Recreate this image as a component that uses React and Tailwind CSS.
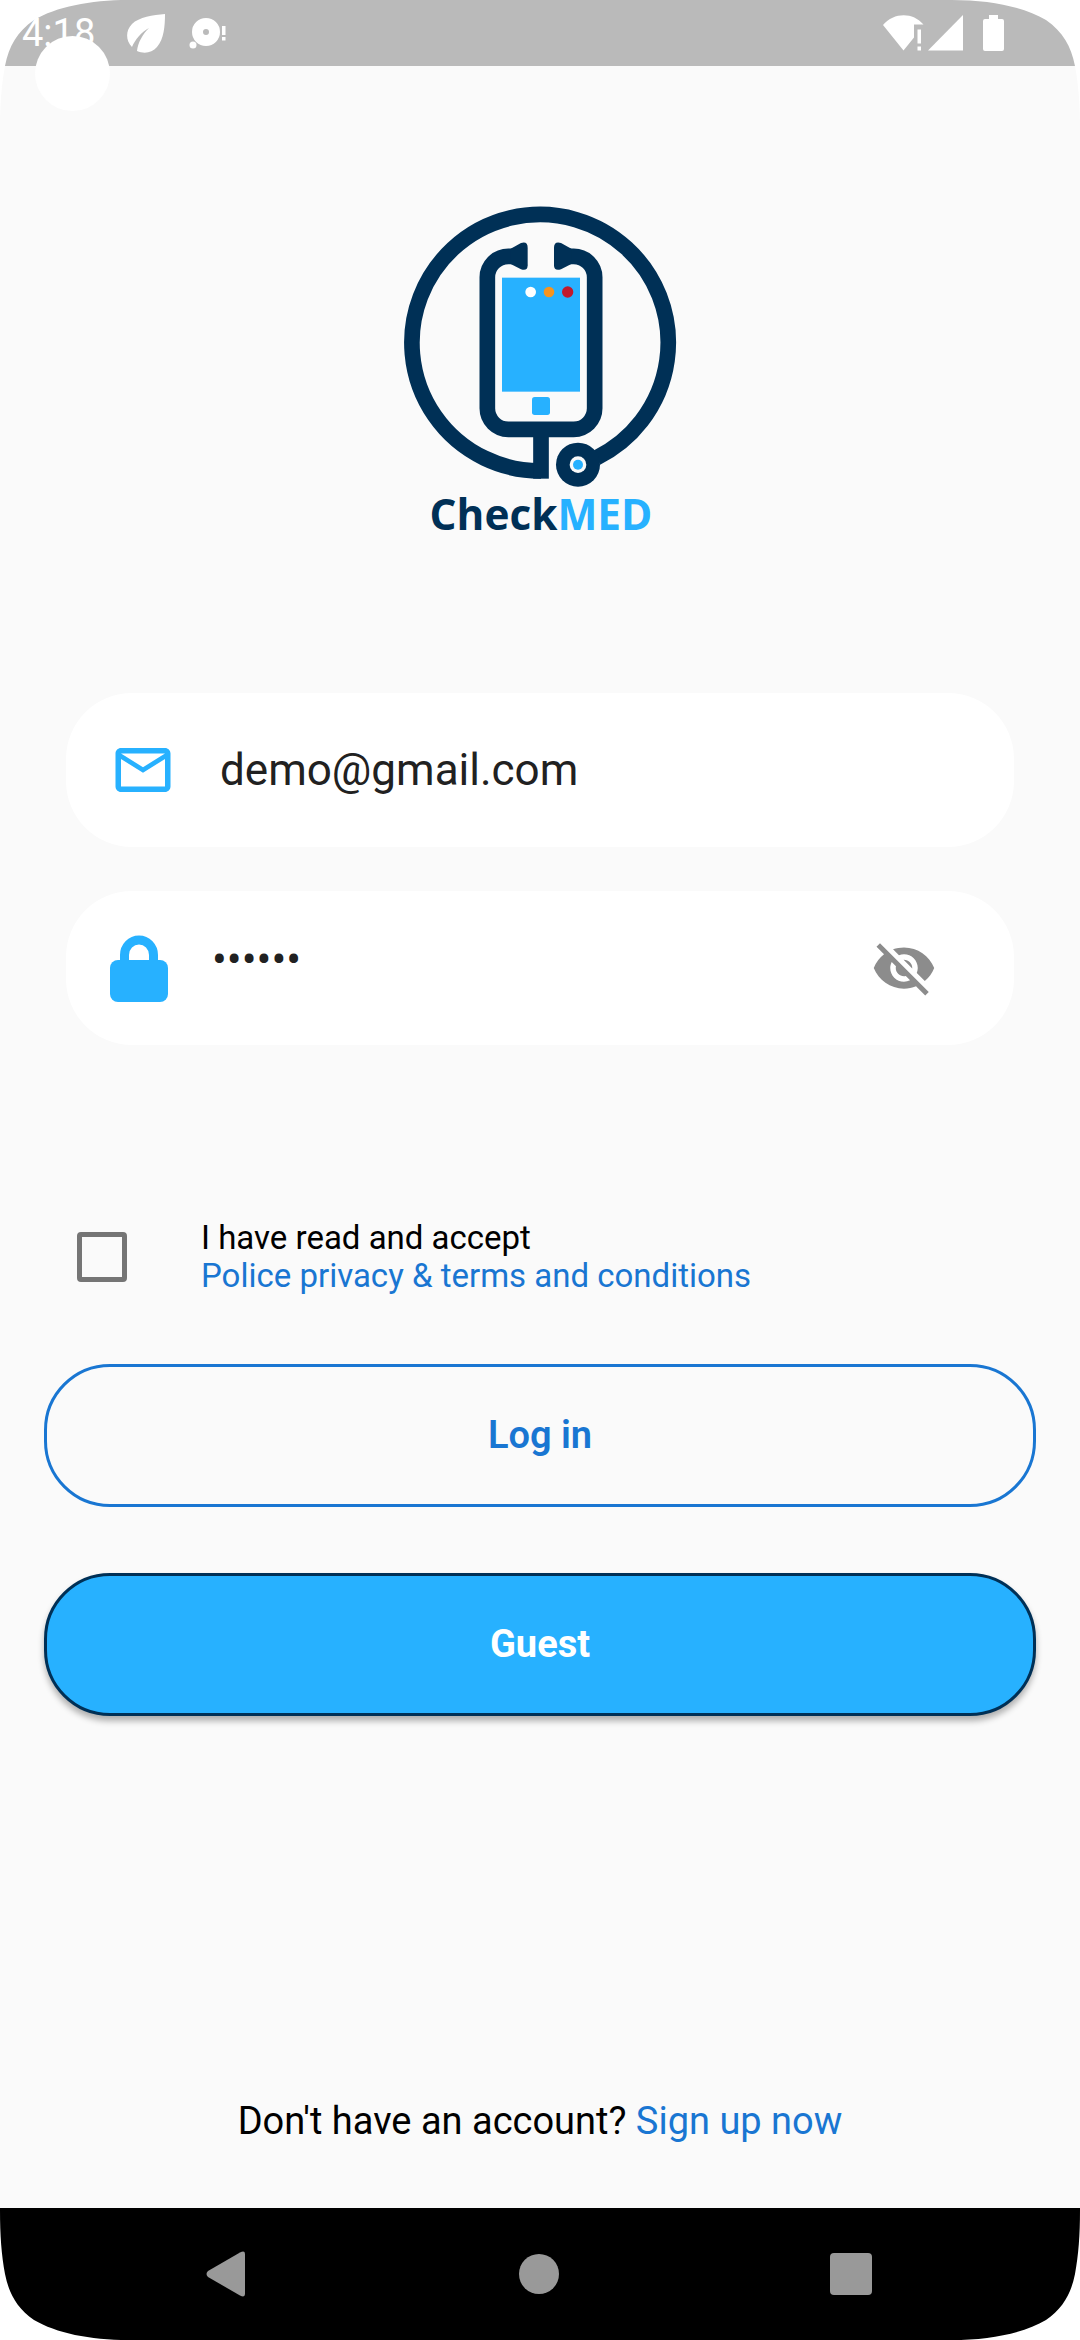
import { useState } from 'react';
import { MdOutlineMail, MdVisibilityOff, MdVisibility } from 'react-icons/md';

/**
 * Login screen for CheckMED, drawn inside the Android system chrome
 * (status bar on top, navigation bar at the bottom).
 */

const CORNERS = [
  'top-0 left-0',
  'top-0 right-0 -scale-x-100',
  'bottom-0 left-0 -scale-y-100',
  'bottom-0 right-0 -scale-100',
];

function ScreenCorner({ className }) {
  return (
    <svg
      viewBox="0 0 130 130"
      className={`absolute size-[130px] text-white pointer-events-none ${className}`}
      fill="currentColor"
      aria-hidden="true"
    >
      <path d="M0 0H128C90 0 56 7 34 20C17 32 9 46 5 66C1.500 85 0 105 0 130Z" />
    </svg>
  );
}

function StatusBar() {
  return (
    <header className="relative h-[66px] bg-[#bababa] text-white flex items-center justify-between pl-[22px] pr-[76px]">
      <div className="flex items-center">
        <span className="w-[76px] text-[38px] leading-[44px]">4:18</span>
        <svg viewBox="0 0 38 39" className="ml-[29px] w-[38px] h-[39px]" fill="currentColor" aria-hidden="true">
          <path d="M38 0C26 1 12 3 5 10C-2 17 -1 27 5 33C8 26 14 18 22 14C16 20 11 28 10 37C17 40 25 39 30 33C37 25 38 12 38 0Z" />
        </svg>
        <svg viewBox="0 0 38 32" className="ml-6 w-[38px] h-8" fill="currentColor" aria-hidden="true">
          <path
            fillRule="evenodd"
            d="M17 1a14 14 0 1 0 0 28a14 14 0 1 0 0-28ZM17 12a3 3 0 1 1 0 6a3 3 0 1 1 0-6Z"
          />
          <circle cx="4" cy="28" r="3.500" />
          <path d="M33 9h3.500v9H33ZM33 20h3.500v3.500H33Z" />
        </svg>
      </div>
      <div className="flex items-center">
        <svg viewBox="0 0 41 36" className="w-[41px] h-9" fill="currentColor" aria-hidden="true">
          <path d="M20.500 35.500L0 10C11-3 30-3 40.500 9.500H31V22.500Z" />
          <path d="M34.500 14.500h3.500v14h-3.500ZM34.500 31.500h3.500v4h-3.500Z" />
        </svg>
        <svg viewBox="0 0 35 36" className="ml-1 w-[35px] h-9" fill="currentColor" aria-hidden="true">
          <path d="M35 0V35.500H0Z" />
        </svg>
        <svg viewBox="0 0 21 36" className="ml-5 w-[21px] h-9" fill="currentColor" aria-hidden="true">
          <path d="M6 0h9v4h4a2 2 0 0 1 2 2v28a2 2 0 0 1-2 2H2a2 2 0 0 1-2-2V6a2 2 0 0 1 2-2h4Z" />
        </svg>
      </div>
      {/* camera cutout */}
      <span className="absolute left-[35px] top-9 size-[75px] rounded-full bg-white" />
    </header>
  );
}

function Logo() {
  return (
    <svg viewBox="0 0 900 1080" className="w-[300px] h-[360px]" role="img" aria-label="CheckMED">
      <g fill="none" stroke="#003056" strokeWidth="47">
        <path d="M620 803A384.500 384.500 0 1 0 453 842.500" />
        <path d="M453 866V718" />
        <path d="M385 199H355A63 63 0 0 0 292 262V655A63 63 0 0 0 355 718H551A63 63 0 0 0 614 655V262A63 63 0 0 0 551 199H521" />
      </g>
      <g fill="#003056">
        <path d="M362 176L393 159Q413 153 413 173V226Q413 244 393 238L362 222Z" />
        <path d="M544 176L513 159Q492 153 492 173V226Q492 244 513 238L544 222Z" />
        <circle cx="564" cy="824" r="66" />
      </g>
      <circle cx="564" cy="824" r="25" fill="#fafafa" />
      <circle cx="564" cy="824" r="15" fill="#27b1ff" />
      <rect x="336" y="263" width="234" height="342" fill="#27b1ff" />
      <rect x="426" y="621" width="54" height="54" rx="8" fill="#27b1ff" />
      <circle cx="422" cy="306" r="16" fill="#fff" />
      <circle cx="477" cy="306" r="16" fill="#f7941e" />
      <circle cx="533" cy="306" r="17" fill="#c2182c" />
      <text x="453" y="1021" textAnchor="middle" fontFamily="'Open Sans', 'Noto Sans', sans-serif" fontWeight="700" fontSize="127">
        <tspan fill="#003056">Check</tspan>
        <tspan fill="#27b1ff">MED</tspan>
      </text>
    </svg>
  );
}

function LockIcon() {
  return (
    <svg viewBox="0 0 58 68" className="w-[58px] h-[68px] shrink-0" aria-hidden="true">
      <path d="M14.500 32V21a14.500 15 0 0 1 29 0V32" fill="none" stroke="#27b1ff" strokeWidth="9" />
      <rect y="26" width="58" height="42" rx="8" fill="#27b1ff" />
    </svg>
  );
}

function NavBar() {
  return (
    <nav className="h-[132px] bg-black text-[#999] flex items-center justify-between pl-[204px] pr-[208px]">
      <button type="button" aria-label="Back">
        <svg viewBox="0 0 44 46" className="w-11 h-[46px]" fill="currentColor">
          <path d="M36 1.500Q41 -1 41 3V43Q41 47 36 44.500L4 26Q1 23 4 20Z" />
        </svg>
      </button>
      <button type="button" aria-label="Home" className="size-10 rounded-full bg-current" />
      <button type="button" aria-label="Recent apps" className="size-[42px] rounded bg-current" />
    </nav>
  );
}

export default function App() {
  const [email, setEmail] = useState('demo@gmail.com');
  const [password, setPassword] = useState('secret');
  const [showPassword, setShowPassword] = useState(false);
  const [accepted, setAccepted] = useState(false);

  return (
    <div className="relative min-h-screen flex flex-col bg-[#fafafa] font-[Roboto,sans-serif] text-black">
      <StatusBar />

      <main className="flex-1 flex flex-col px-11">
        <div className="flex justify-center pt-[124px]">
          <Logo />
        </div>

        <form className="flex flex-col" onSubmit={e => e.preventDefault()}>
          <div className="mx-[22px] mt-[143px] flex flex-col gap-11 text-[44px] leading-[52px] text-[#212121]">
            <label className="h-[154px] rounded-[66px] bg-white flex items-center px-11">
              <MdOutlineMail className="size-[66px] shrink-0 text-[#27b1ff]" aria-hidden="true" />
              <input
                type="email"
                aria-label="Email"
                value={email}
                onChange={e => setEmail(e.target.value)}
                className="ml-11 min-w-0 flex-1 bg-transparent outline-none"
              />
            </label>
            <div className="h-[154px] rounded-[66px] bg-white flex items-center pl-11 pr-[77px]">
              <LockIcon />
              <input
                type={showPassword ? 'text' : 'password'}
                aria-label="Password"
                value={password}
                onChange={e => setPassword(e.target.value)}
                className="ml-11 pb-4 min-w-0 flex-1 bg-transparent outline-none"
              />
              <button
                type="button"
                aria-label="Toggle password visibility"
                onClick={() => setShowPassword(!showPassword)}
                className="text-[#8c8c8c]"
              >
                {showPassword ? <MdVisibility className="size-[66px]" /> : <MdVisibilityOff className="size-[66px]" />}
              </button>
            </div>
          </div>

          <div className="mt-[174px] ml-[33px] flex items-center gap-[74px] text-[33px] leading-[38px]">
            <input
              id="terms"
              type="checkbox"
              checked={accepted}
              onChange={e => setAccepted(e.target.checked)}
              className="size-[50px] appearance-none rounded border-[5px] border-[#757575] checked:bg-[#27b1ff]"
            />
            <div>
              <label htmlFor="terms" className="block">I have read and accept</label>
              <a href="#terms" className="block text-[#1976d2]">Police privacy &amp; terms and conditions</a>
            </div>
          </div>

          <button
            type="submit"
            className="mt-[69px] h-[143px] rounded-[66px] border-3 border-[#1976d2] text-[38px] font-semibold text-[#1976d2]"
          >
            Log in
          </button>
          <button
            type="button"
            className="mt-[66px] h-[143px] rounded-[66px] border-3 border-[#003056] bg-[#27b1ff] text-[38px] font-bold text-white shadow-[0_5px_6px_rgba(0,0,0,0.3)]"
          >
            Guest
          </button>
        </form>

        <p className="mt-auto pb-16 text-center text-[38px] leading-[46px]">
          Don't have an account? <a href="#signup" className="text-[#1976d2]">Sign up now</a>
        </p>
      </main>

      <NavBar />

      {CORNERS.map(c => <ScreenCorner key={c} className={c} />)}
    </div>
  );
}
